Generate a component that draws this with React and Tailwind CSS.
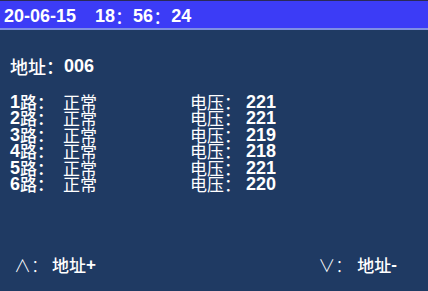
const rows = [
  { n: 1, v: 221 },
  { n: 2, v: 221 },
  { n: 3, v: 219 },
  { n: 4, v: 218 },
  { n: 5, v: 221 },
  { n: 6, v: 220 },
];

const num = "font-['Liberation_Sans',sans-serif] font-bold";
const cjk = "font-['Noto_Sans_CJK_SC',sans-serif]";

export default function App() {
  return (
    <div className="flex h-[291px] w-[428px] flex-col bg-[#1f3a63] text-white">
      <div className="h-[30px] border-t border-b-2 border-t-[#2a2a58] border-b-[#7f8fe3] bg-[#3c3cf6]">
        <div className={`flex h-full items-center pl-[4px] pt-[2px] text-[18px] leading-none ${num}`}>
          <span>20-06-15</span>
          <span className="ml-[19px]">18</span>
          <span className={`${cjk} font-normal`}>：</span>
          <span>56</span>
          <span className={`${cjk} font-normal`}>：</span>
          <span>24</span>
        </div>
      </div>

      <div className="mt-[26px] flex items-center pl-[10px] text-[18px] leading-[20px]">
        <span className={`${cjk} font-medium`}>地址：</span>
        <span className={num}>006</span>
      </div>

      <div className="mt-[18px] flex flex-col pl-[10px] text-[17px] leading-[16.4px]">
        {rows.map((r) => (
          <div key={r.n} className="flex items-center">
            <div className="flex w-[53px] items-center">
              <span className={`${num} text-[18px]`}>{r.n}</span>
              <span className={`${cjk} font-medium`}>路：</span>
            </div>
            <span className={`${cjk} font-normal`}>正常</span>
            <div className="ml-[93px] flex items-center">
              <span className={`${cjk} font-normal`}>电压：</span>
              <span className={`${num} ml-[5px] text-[18px]`}>{r.v}</span>
            </div>
          </div>
        ))}
      </div>

      <div className="mt-auto mb-[16px] flex items-center justify-between pl-[14px] pr-[31px] text-[17px] leading-[20px]">
        <div className="flex items-center">
          <span className={`${cjk} w-[38px] font-light`}>∧：</span>
          <span className={`${cjk} font-medium`}>地址</span>
          <span className={num}>+</span>
        </div>
        <div className="flex items-center">
          <span className={`${cjk} w-[39px] font-light`}>∨：</span>
          <span className={`${cjk} font-medium`}>地址</span>
          <span className={num}>-</span>
        </div>
      </div>
    </div>
  );
}
